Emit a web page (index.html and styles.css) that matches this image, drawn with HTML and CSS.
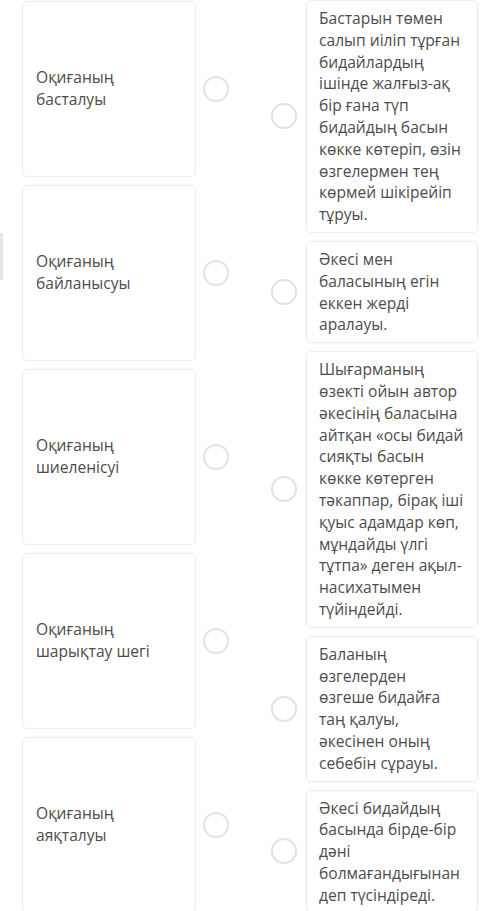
FILE: index.html
```html
<!DOCTYPE html>
<html lang="kk">
<head>
    <meta charset="UTF-8">
    <meta name="viewport" content="width=device-width, initial-scale=1.0">
    <title>Сәйкестендіру</title>
    <link rel="stylesheet" href="styles.css">
</head>
<body>
    <div class="edge-tab"></div>
    <div class="board">
        <!-- Left column: terms -->
        <div class="column terms">
            <div class="item">
                <div class="card term"><p>Оқиғаның басталуы</p></div>
                <span class="dot"></span>
            </div>
            <div class="item">
                <div class="card term"><p>Оқиғаның байланысуы</p></div>
                <span class="dot"></span>
            </div>
            <div class="item">
                <div class="card term"><p>Оқиғаның шиеленісуі</p></div>
                <span class="dot"></span>
            </div>
            <div class="item">
                <div class="card term"><p>Оқиғаның шарықтау шегі</p></div>
                <span class="dot"></span>
            </div>
            <div class="item">
                <div class="card term"><p>Оқиғаның аяқталуы</p></div>
                <span class="dot"></span>
            </div>
        </div>

        <!-- Right column: definitions -->
        <div class="column answers">
            <div class="item">
                <span class="dot"></span>
                <div class="card answer"><p>Бастарын төмен салып иіліп тұрған бидайлардың ішінде жалғыз-ақ бір ғана түп бидайдың басын көкке көтеріп, өзін өзгелермен тең көрмей шікірейіп тұруы.</p></div>
            </div>
            <div class="item">
                <span class="dot"></span>
                <div class="card answer"><p>Әкесі мен баласының егін еккен жерді аралауы.</p></div>
            </div>
            <div class="item">
                <span class="dot"></span>
                <div class="card answer"><p>Шығарманың өзекті ойын автор әкесінің баласына айтқан «осы бидай сияқты басын көкке көтерген тәкаппар, бірақ іші қуыс адамдар көп, мұндайды үлгі тұтпа» деген ақыл-насихатымен түйіндейді.</p></div>
            </div>
            <div class="item">
                <span class="dot"></span>
                <div class="card answer"><p>Баланың өзгелерден өзгеше бидайға таң қалуы, әкесінен оның себебін сұрауы.</p></div>
            </div>
            <div class="item">
                <span class="dot"></span>
                <div class="card answer"><p>Әкесі бидайдың басында бірде-бір дәні болмағандығынан деп түсіндіреді.</p></div>
            </div>
        </div>
    </div>
</body>
</html>
```

FILE: styles.css
```css
body {
    margin: 0;
    padding: 0;
    background: #fff;
    font-family: "Open Sans", "Noto Sans", sans-serif;
    font-size: 15.6px;
    line-height: 21.8px;
    color: #4d4d4d;
    overflow: hidden;
}
p {
    margin: 0;
}
.edge-tab {
    position: absolute;
    left: 0;
    top: 233px;
    width: 3px;
    height: 47px;
    background: #e6e6e6;
}
.board {
    display: flex;
    align-items: flex-start;
    padding-left: 22px;
}
.column {
    display: flex;
    flex-direction: column;
    gap: 8px;
}
.terms {
    padding-top: 1px;
}
.answers {
    margin-left: 42px;
}
.item {
    display: flex;
    align-items: center;
}
.card {
    background: #fff;
    border: 1px solid #ececec;
    border-radius: 5px;
    box-sizing: border-box;
}
.term {
    width: 174px;
    height: 176px;
    display: flex;
    align-items: center;
    padding: 0 13px;
}
.answer {
    width: 172px;
    padding: 7px 12px 6px 12px;
    margin-left: 9px;
}
.dot {
    width: 26px;
    height: 26px;
    box-sizing: border-box;
    border: 2px solid #e2e2e2;
    border-radius: 50%;
    flex-shrink: 0;
}
.terms .dot {
    margin-left: 7px;
}
```
